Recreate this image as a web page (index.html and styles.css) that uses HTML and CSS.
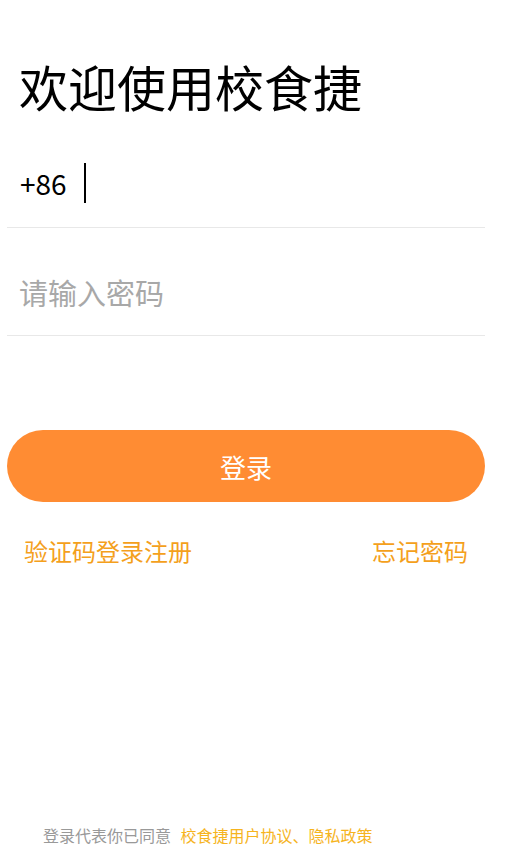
FILE: index.html
```html
<!DOCTYPE html>
<html>
<head>
    <meta name="viewport" content="width=device-width, initial-scale=1">
    <title>校食捷 登录</title>
    <link rel="stylesheet" href="styles.css">
</head>
<body>
    <div class="page">
        <h1 class="title">欢迎使用校食捷</h1>

        <div class="field phone">
            <span class="prefix">+86</span>
            <span class="cursor"></span>
        </div>

        <div class="field password">
            <span class="placeholder">请输入密码</span>
        </div>

        <button class="login-btn">登录</button>

        <div class="links">
            <a class="link">验证码登录注册</a>
            <a class="link">忘记密码</a>
        </div>

        <div class="agree">
            <span class="agree-text">登录代表你已同意</span>
            <span class="agree-link">校食捷用户协议、隐私政策</span>
        </div>
    </div>
</body>
</html>
```

FILE: styles.css
```css
body {
    margin: 0;
    background: #fff;
    font-family: "Noto Sans CJK SC", "Noto Sans", sans-serif;
}

.page {
    width: 478px;
    margin-left: 7px;
    height: 863px;
    display: flex;
    flex-direction: column;
}

.title {
    margin: 56px 0 0 12px;
    font-size: 49px;
    font-weight: normal;
    line-height: 60px;
    color: #000;
}

.field {
    display: flex;
    align-items: center;
    padding-left: 13px;
    border-bottom: 1px solid #e8e8e8;
    box-sizing: border-box;
}

.phone {
    height: 112px;
    padding-top: 22px;
}

.password {
    height: 108px;
    padding-top: 20px;
    padding-left: 12px;
}

.prefix {
    font-size: 28px;
    color: #000;
}

.cursor {
    width: 2px;
    height: 40px;
    margin-left: 17px;
    background: #000;
}

.placeholder {
    font-size: 29px;
    color: #a8a8a8;
}

.login-btn {
    margin-top: 94px;
    height: 72px;
    border: none;
    border-radius: 36px;
    background: #ff8c33;
    color: #fff;
    font-family: inherit;
    font-size: 26px;
}

.links {
    display: flex;
    justify-content: space-between;
    margin-top: 31px;
    padding: 0 17px 0 17px;
}

.link {
    font-size: 24px;
    color: #f4a01c;
}

.agree {
    margin-top: auto;
    margin-bottom: 16px;
    padding-left: 36px;
    font-size: 16px;
}

.agree-text {
    color: #999;
}

.agree-link {
    margin-left: 6px;
    color: #f6b41e;
}
```
